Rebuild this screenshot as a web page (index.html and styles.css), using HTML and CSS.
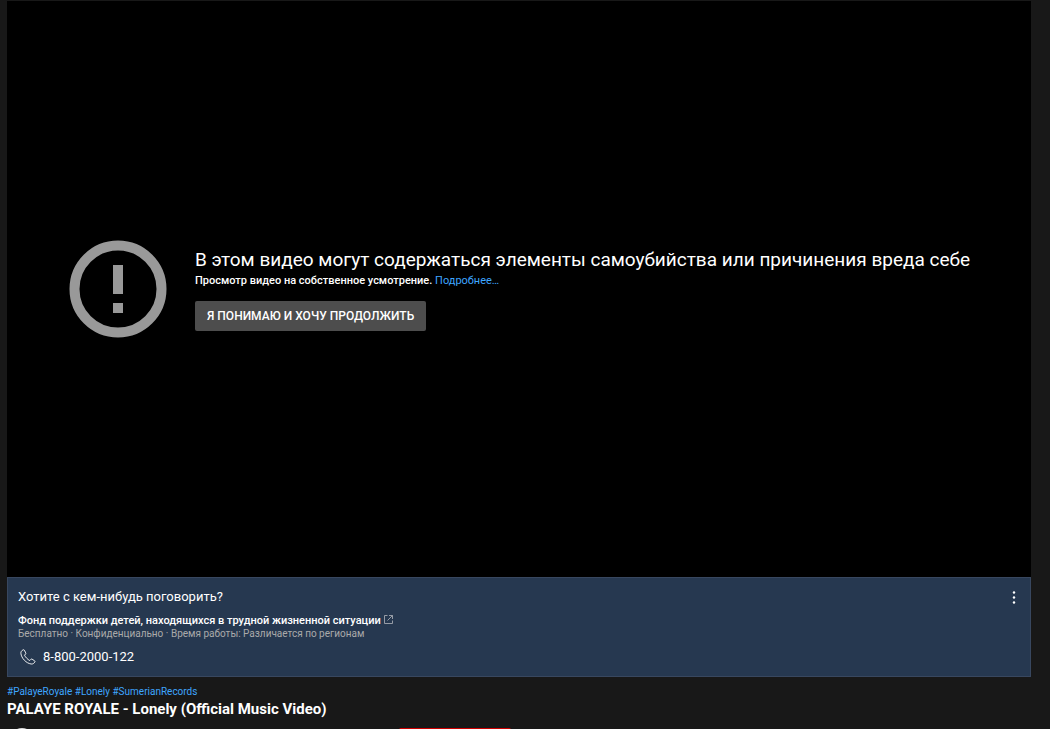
FILE: index.html
```html
<!DOCTYPE html>
<html lang="ru">
<head>
<meta charset="utf-8">
<meta name="viewport" content="width=device-width, initial-scale=1">
<title>PALAYE ROYALE - Lonely (Official Music Video)</title>
<link rel="stylesheet" href="styles.css">
</head>
<body>
<main class="watch">
  <section class="player">
    <svg class="warning-icon" viewBox="0 0 98 98" aria-hidden="true">
      <circle cx="49" cy="49" r="43.5" fill="none" stroke="#999" stroke-width="10"/>
      <path d="M44 25h10v29H44zM44 63h10v10H44z" fill="#999"/>
    </svg>
    <div class="warning">
      <h2 class="warning-title">В этом видео могут содержаться элементы самоубийства или причинения вреда себе</h2>
      <p class="warning-text">Просмотр видео на собственное усмотрение. <a class="link" href="#">Подробнее…</a></p>
      <button class="confirm" type="button">Я ПОНИМАЮ И ХОЧУ ПРОДОЛЖИТЬ</button>
    </div>
  </section>
  <section class="support">
    <header class="support-head">
      <h3 class="support-title">Хотите с кем-нибудь поговорить?</h3>
      <button class="menu" type="button" aria-label="Меню">
        <svg class="menu-icon" viewBox="0 0 4 14" aria-hidden="true"><g fill="#fff"><circle cx="2" cy="2.500" r="1.200"/><circle cx="2" cy="7.500" r="1.200"/><circle cx="2" cy="12.500" r="1.200"/></g></svg>
      </button>
    </header>
    <a class="fund" href="#">Фонд поддержки детей, находящихся в трудной жизненной ситуации
      <svg class="external-icon" viewBox="0 0 9 9" aria-hidden="true"><path d="M3.5.5h-3v8h8v-3M5 .5h3.5V4M8.5.5l-5 5" fill="none" stroke="#a3a8b0" stroke-width=".9"/></svg>
    </a>
    <p class="details">Бесплатно · Конфиденциально · Время работы: Различается по регионам</p>
    <a class="phone" href="tel:88002000122">
      <svg class="phone-icon" viewBox="0 0 16 16" aria-hidden="true"><path d="M3.2.8C1.7 1.500.7 2.700.9 4.300 1.400 9.300 6.200 14.300 11.200 15c1.600.2 2.900-.7 3.700-2.100.2-.4.100-.8-.3-1.100l-2.500-1.600c-.4-.3-.9-.2-1.200.100l-1.200 1.200C7.700 10.500 5.500 8.300 4.500 6.200l1.100-1.200c.3-.3.300-.7.100-1.100L4.400 1.200C4.200.8 3.700.6 3.200.8Z" fill="none" stroke="#fff" stroke-width=".9"/></svg>
      8-800-2000-122
    </a>
  </section>
  <section class="info">
    <nav class="tags"><a class="link" href="#">#PalayeRoyale</a> <a class="link" href="#">#Lonely</a> <a class="link" href="#">#SumerianRecords</a></nav>
    <h1 class="video-title">PALAYE ROYALE - Lonely (Official Music Video)</h1>
    <div class="owner">
      <span class="avatar"></span>
      <button class="subscribe" type="button" aria-label="Подписаться"></button>
    </div>
  </section>
</main>
</body>
</html>
```
FILE: styles.css
```css
* { box-sizing: border-box; }
html { height: 100%; overflow: hidden; background: #181818; }
body { margin: 0; height: 100%; overflow: hidden; color: #fff; font-family: Roboto, "Liberation Sans", sans-serif; }
h1, h2, h3, p { margin: 0; }
button { border: 0; font-family: inherit; color: inherit; cursor: pointer; }
a { color: inherit; text-decoration: none; }
a.link { color: #3ea6ff; }

.watch { padding: 1px 19px 0 7px; }
.player { display: flex; align-items: center; gap: 28px; aspect-ratio: 16 / 9; padding: 0 50px 0 62px; background: #000; }
.warning-icon { flex: none; width: 98px; height: 98px; }
.warning { flex: 1; min-width: 0; }
.warning-title { font-size: 19px; line-height: 24px; font-weight: 400; }
.warning-text { font-size: 11px; line-height: 17px; font-weight: 500; }
.warning-text .link { font-weight: 400; }
.confirm { display: block; margin-top: 12px; height: 30px; padding: 0 12px; border-radius: 2px; background: #4d4d4d; font-size: 12px; font-weight: 500; white-space: nowrap; }

.support { display: flex; flex-direction: column; align-items: flex-start; padding: 10px; border: 1px solid #38475f; background: #263850; }
.support-head { display: flex; justify-content: space-between; align-self: stretch; padding-right: 4px; }
.support-title { font-size: 13px; line-height: 18px; font-weight: 400; }
.menu { display: flex; align-items: center; padding: 0; background: none; }
.menu-icon { width: 4px; height: 14px; }
.fund { margin-top: 8px; font-size: 11px; line-height: 14px; font-weight: 500; }
.external-icon { width: 9px; height: 9px; }
.details { font-size: 10px; line-height: 12px; color: #aaa; }
.phone { display: flex; align-items: center; gap: 7px; margin-top: 8px; padding-left: 2px; font-size: 13px; line-height: 18px; }
.phone-icon { width: 16px; height: 16px; }

.info { padding-top: 8px; }
.tags { font-size: 10px; line-height: 14px; }
.video-title { font-size: 15px; line-height: 20px; font-weight: 700; }
.owner { display: flex; align-items: flex-start; padding: 9px 0 0 3px; }
.avatar { width: 24px; height: 24px; border-radius: 50%; background: #ddd; }
.subscribe { width: 112px; height: 36px; margin-left: 365px; border-radius: 2px; background: #c00; }
```
